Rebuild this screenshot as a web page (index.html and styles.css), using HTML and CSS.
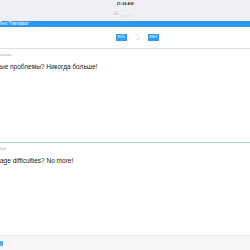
FILE: index.html
```html
<!DOCTYPE html>
<html lang="ru">
<head>
<meta charset="UTF-8" />
<meta name="viewport" content="width=device-width, initial-scale=1" />
<title>Text Translator</title>
<link rel="stylesheet" href="styles.css">
</head>
<body>

<div class="status">
  <div class="clock">11:34 AM</div>
  <div class="hint">
    <svg class="hint-icon" width="6" height="4" viewBox="0 0 6 4"><path d="M0 4 L3 0 L6 4 Z" fill="#d8d8dc"/></svg>
    <span>Search…</span>
  </div>
</div>

<div class="titlebar">Text Translator</div>

<div class="langs">
  <span class="lang">RUS</span>
  <svg class="arrow" width="4" height="7" viewBox="0 0 4 7"><path d="M0.5 0.5 L3.5 3.5 L0.5 6.5" fill="none" stroke="#b5dbf7" stroke-width="0.8"/></svg>
  <span class="lang">ENG</span>
</div>

<div class="pane pane-top">
  <div class="pane-label">ussian</div>
  <div class="pane-text">ые проблемы? Никогда больше!</div>
</div>

<div class="pane pane-bottom">
  <div class="pane-label">lish</div>
  <div class="pane-text">age difficulties? No more!</div>
</div>

<div class="footer">
  <span class="footer-icon"></span>
</div>

</body>
</html>
```

FILE: styles.css
```css
body {
  margin: 0;
  width: 250px;
  height: 250px;
  overflow: hidden;
  display: flex;
  flex-direction: column;
  font-family: "Liberation Sans", Arial, sans-serif;
  background: #fff;
  color: #222;
}

/* --- Barra di stato --- */
.status {
  height: 21px;
  background: #efeff4;
  display: flex;
  flex-direction: column;
  align-items: center;
}
.clock {
  font-size: 4px;
  font-weight: bold;
  line-height: 5px;
  margin-top: 1px;
  color: #333;
}
.hint {
  display: flex;
  align-items: flex-end;
  gap: 1px;
  margin-top: 5px;
  font-size: 4px;
  line-height: 5px;
  color: #d6d6da;
}
.hint-icon {
  margin-bottom: 3px;
}

/* --- Titolo --- */
.titlebar {
  height: 6px;
  background: #2b97ef;
  color: #fff;
  font-size: 4.5px;
  line-height: 6px;
  margin-left: -1px;
  white-space: nowrap;
}

/* --- Lingue --- */
.langs {
  height: 21px;
  display: flex;
  align-items: center;
  justify-content: center;
  padding-left: 24px;
  border-bottom: 1px solid #e2e2e2;
}
.lang {
  background: #2d9cf0;
  color: #fff;
  font-size: 3.5px;
  line-height: 7px;
  padding: 0 2px;
  width: 7px;
  text-align: center;
}
.arrow {
  margin: 0 8px 0 9px;
}

/* --- Pannelli testo --- */
.pane {
  flex: 1;
  white-space: nowrap;
}
.pane-top {
  border-bottom: 1px solid #a9d6f8;
}
.pane-bottom {
  border-bottom: 1px solid #e8e8e8;
}
.pane-label {
  font-size: 4px;
  color: #a0a0a0;
  line-height: 5px;
  margin-top: 3px;
}
.pane-text {
  font-size: 6.5px;
  line-height: 8px;
  margin-top: 6px;
}

/* --- Barra inferiore --- */
.footer {
  height: 14px;
  background: #f6f6f6;
  display: flex;
  align-items: center;
}
.footer-icon {
  width: 3px;
  height: 5px;
  background: #5ab1f2;
}
```
